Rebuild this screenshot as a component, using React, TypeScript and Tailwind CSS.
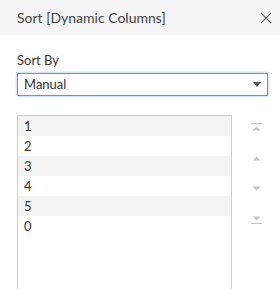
import React from 'react';

const items = ['1', '2', '3', '4', '5', '0'];

const Tri = ({ up, bar }: { up: boolean; bar: 'top' | 'bottom' | null }) => (
  <svg width="11" height="11" viewBox="0 0 11 11" className="block">
    {bar === 'top' && <rect x="0" y="0" width="11" height="1" fill="#c4c4c4" />}
    {up ? (
      <polygon points="1.5,7.5 9.5,7.5 5.5,3.5" fill="#c4c4c4" />
    ) : (
      <polygon points="1.5,3.5 9.5,3.5 5.5,7.5" fill="#c4c4c4" />
    )}
    {bar === 'bottom' && <rect x="0" y="10" width="11" height="1" fill="#c4c4c4" />}
  </svg>
);

export default function App() {
  return (
    <div className="w-[280px] h-[289px] overflow-hidden bg-white text-[#333] font-['Lato',sans-serif] text-[13px]">
      {/* Header */}
      <div className="h-[35px] bg-[#f5f5f5] flex items-center justify-between pl-[17px] pr-[8px]">
        <span className="text-[14px] text-[#444]">Sort [Dynamic Columns]</span>
        <svg width="12" height="12" viewBox="0 0 12 12" className="mr-[0px]">
          <path d="M1 1 L11 11 M11 1 L1 11" stroke="#666" strokeWidth="1.2" />
        </svg>
      </div>

      {/* Body */}
      <div className="px-[17px] pt-[17px]">
        <div className="leading-[16px] mb-[5px]">Sort By</div>
        <div className="w-[251px] h-[23px] border border-[#5b9bd5] shadow-[0_0_3px_rgba(91,155,213,0.6)] flex items-center justify-between pl-[6px] pr-[6px]">
          <span>Manual</span>
          <svg width="8" height="5" viewBox="0 0 8 5">
            <polygon points="0,0 8,0 4,5" fill="#555" />
          </svg>
        </div>

        <div className="flex mt-[19px]">
          <div className="w-[215px] h-[200px] border border-[#cfcfcf]">
            {items.map((n, i) => (
              <div
                key={n}
                className={`h-[20px] leading-[20px] pl-[6px] ${i % 2 === 0 ? 'bg-[#f3f3f3]' : 'bg-white'}`}
              >
                {n}
              </div>
            ))}
          </div>
          <div className="ml-[19px] pt-[8px] flex flex-col gap-[19px]">
            <Tri up bar="top" />
            <Tri up bar={null} />
            <Tri up={false} bar={null} />
            <Tri up={false} bar="bottom" />
          </div>
        </div>
      </div>
    </div>
  );
}
